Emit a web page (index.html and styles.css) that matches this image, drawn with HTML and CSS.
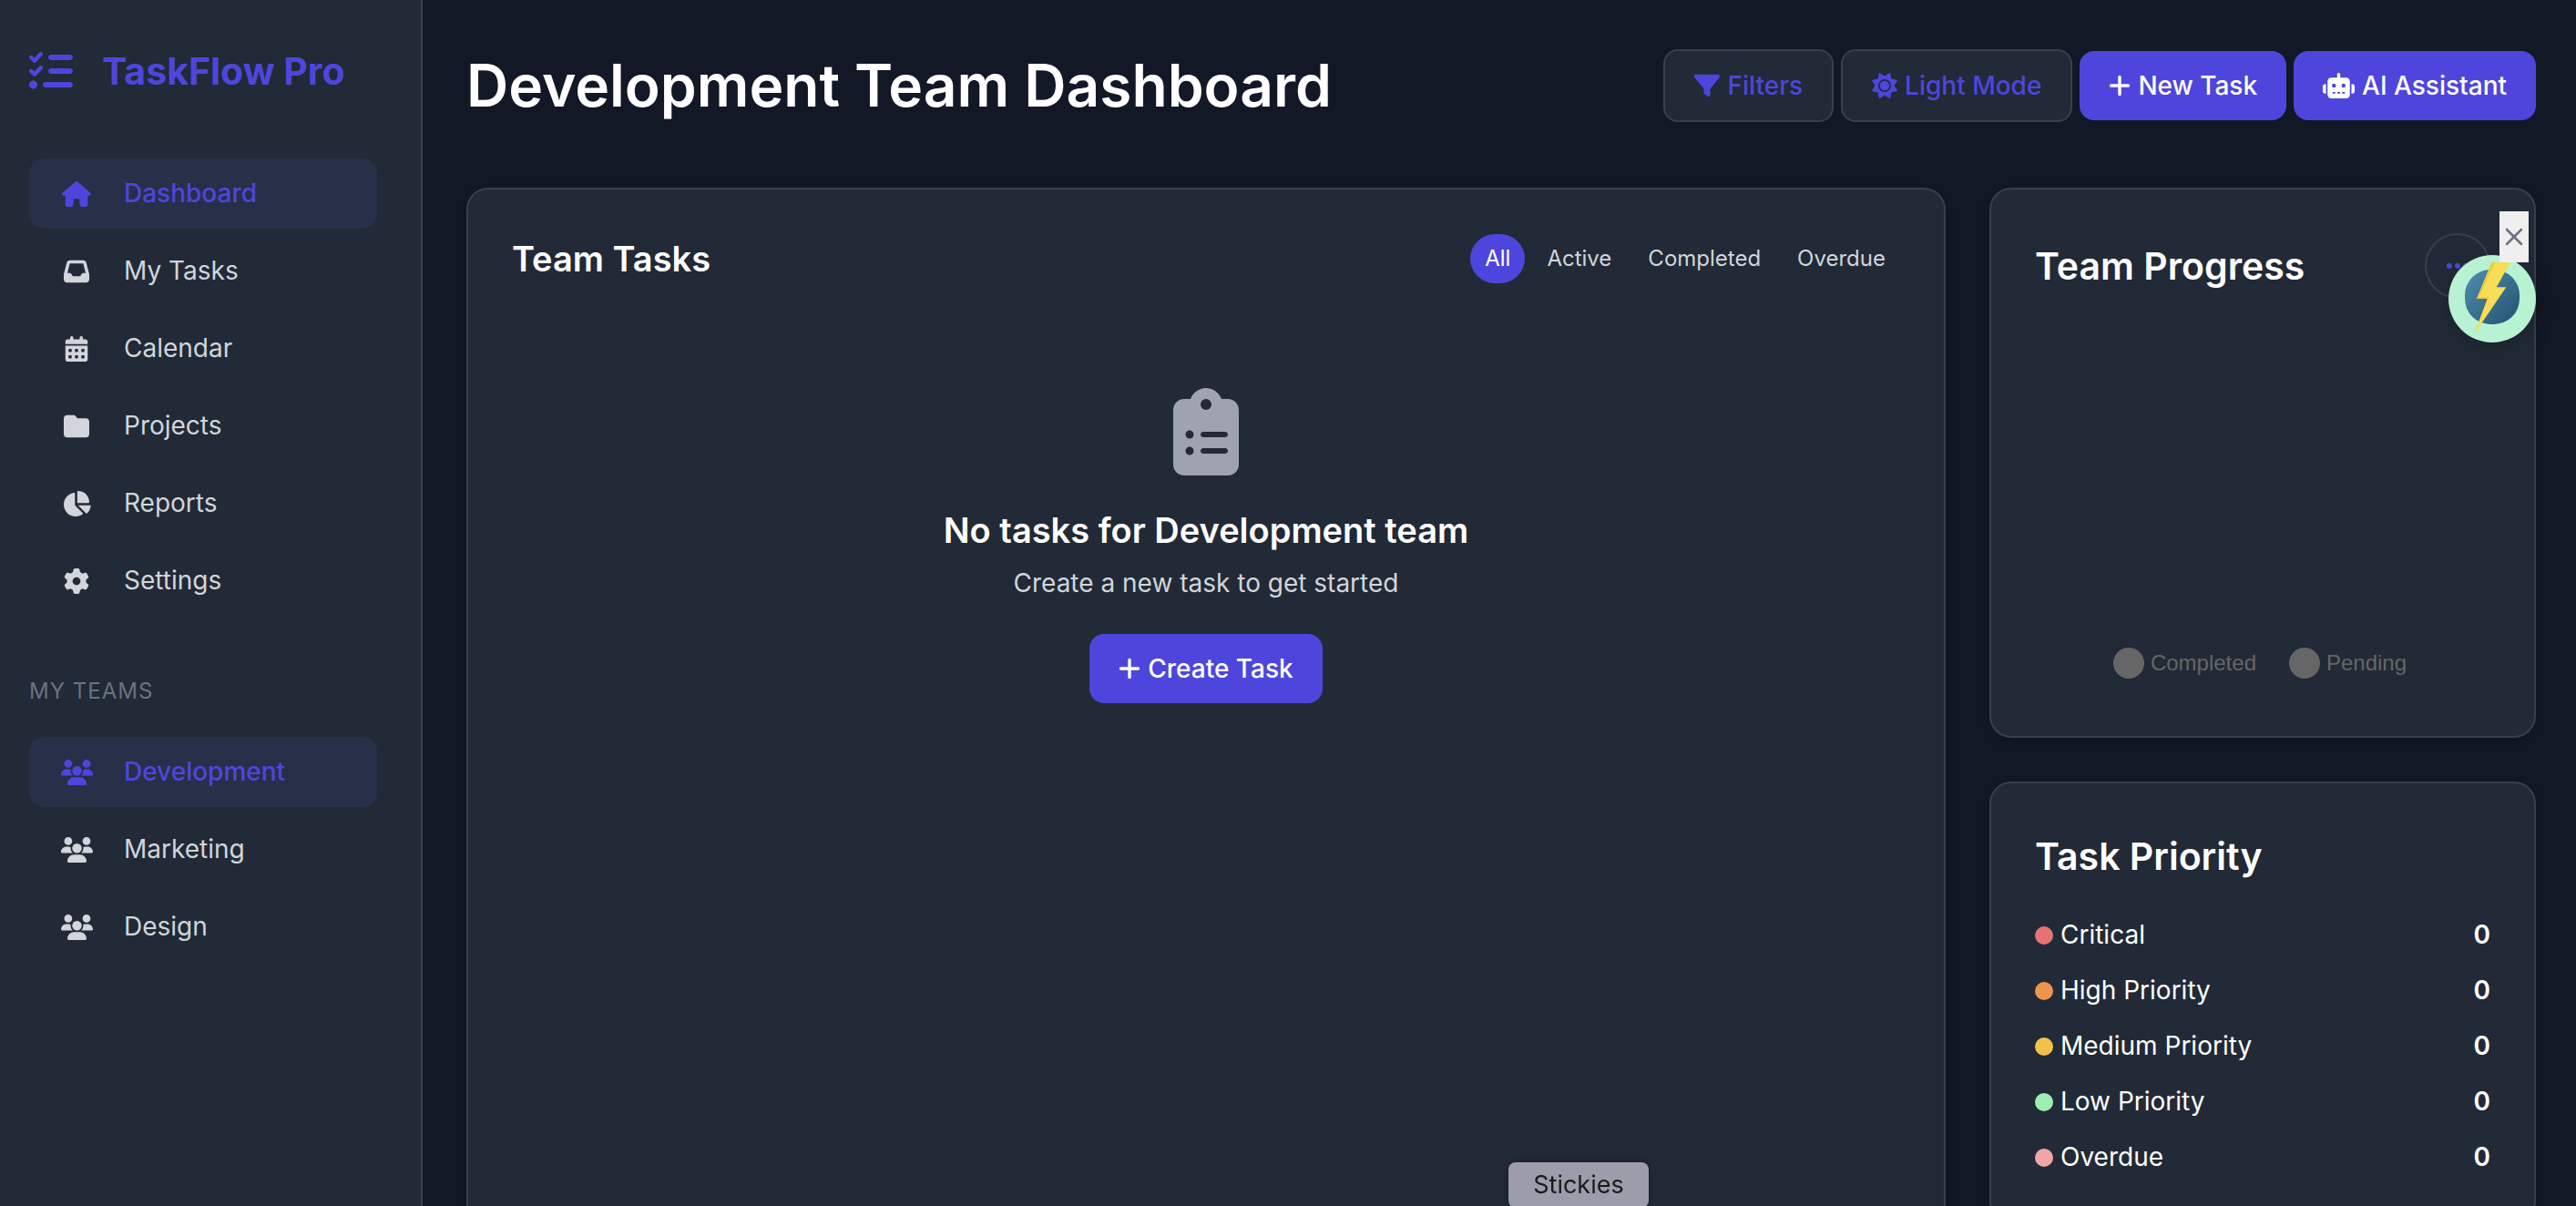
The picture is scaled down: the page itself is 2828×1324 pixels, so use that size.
FILE: index.html
```html
<!DOCTYPE html>
<html lang="en">
<head>
<meta charset="utf-8">
<meta name="viewport" content="width=device-width, initial-scale=1">
<title>TaskFlow Pro</title>
<link rel="stylesheet" href="styles.css">
</head>
<body>
<svg class="sprite" aria-hidden="true">
  <symbol id="i-house" viewBox="0 0 576 512"><path d="M575.8 255.5c0 18-15 32.1-32 32.1h-32l.7 160.2c0 2.7-.2 5.4-.5 8.1V472c0 22.1-17.9 40-40 40H456c-1.1 0-2.2 0-3.3-.1c-1.4 .1-2.8 .1-4.2 .1H416 392c-22.1 0-40-17.9-40-40V448 384c0-17.7-14.3-32-32-32H256c-17.7 0-32 14.3-32 32v64 24c0 22.1-17.9 40-40 40H160 128.1c-1.5 0-3-.1-4.5-.2c-1.2 .1-2.4 .2-3.6 .2H104c-22.1 0-40-17.9-40-40V360c0-.9 0-1.9 .1-2.8V287.6H32c-18 0-32-14-32-32.1c0-9 3-17 10-24L266.4 8c7-7 15-8 22-8s15 2 21 7L564.8 231.5c8 7 12 15 11 24z"/></symbol>
  <symbol id="i-inbox" viewBox="0 0 512 512"><path d="M121 32C91.6 32 66 52 58.9 80.5L1.9 308.4C.6 313.5 0 318.7 0 323.9V416c0 35.3 28.7 64 64 64H448c35.3 0 64-28.7 64-64V323.9c0-5.2-.6-10.4-1.9-15.5l-57-227.9C446 52 420.4 32 391 32H121zm0 64H391l48 192H387.8c-12.1 0-23.2 6.8-28.6 17.7l-14.3 28.6c-5.4 10.8-16.5 17.7-28.6 17.7H195.8c-12.1 0-23.2-6.8-28.6-17.7l-14.3-28.6c-5.4-10.8-16.5-17.7-28.6-17.7H73L121 96z"/></symbol>
  <symbol id="i-calendar" viewBox="0 0 448 512"><path d="M128 0c17.7 0 32 14.3 32 32V64H288V32c0-17.7 14.3-32 32-32s32 14.3 32 32V64h48c26.5 0 48 21.5 48 48v48H0V112C0 85.5 21.5 64 48 64H96V32c0-17.7 14.3-32 32-32zM0 192H448V464c0 26.5-21.5 48-48 48H48c-26.5 0-48-21.5-48-48V192zm64 80v32c0 8.8 7.2 16 16 16h32c8.8 0 16-7.2 16-16V272c0-8.8-7.2-16-16-16H80c-8.8 0-16 7.2-16 16zm128 0v32c0 8.8 7.2 16 16 16h32c8.8 0 16-7.2 16-16V272c0-8.8-7.2-16-16-16H208c-8.8 0-16 7.2-16 16zm144-16c-8.8 0-16 7.2-16 16v32c0 8.8 7.2 16 16 16h32c8.8 0 16-7.2 16-16V272c0-8.8-7.2-16-16-16H336zM64 400v32c0 8.8 7.2 16 16 16h32c8.8 0 16-7.2 16-16V400c0-8.8-7.2-16-16-16H80c-8.8 0-16 7.2-16 16zm144-16c-8.8 0-16 7.2-16 16v32c0 8.8 7.2 16 16 16h32c8.8 0 16-7.2 16-16V400c0-8.8-7.2-16-16-16H208zm112 16v32c0 8.8 7.2 16 16 16h32c8.8 0 16-7.2 16-16V400c0-8.8-7.2-16-16-16H336c-8.8 0-16 7.2-16 16z"/></symbol>
  <symbol id="i-folder" viewBox="0 0 512 512"><path d="M64 480H448c35.3 0 64-28.7 64-64V160c0-35.3-28.7-64-64-64H288c-10.1 0-19.6-4.7-25.6-12.8L243.2 57.6C231.1 41.5 212.1 32 192 32H64C28.7 32 0 60.7 0 96V416c0 35.3 28.7 64 64 64z"/></symbol>
  <symbol id="i-pie" viewBox="0 0 576 512"><path d="M304 240V16.6c0-9 7-16.6 16-16.6C443.7 0 544 100.3 544 224c0 9-7.6 16-16.6 16H304zM32 272C32 150.7 122.1 50.3 239 34.3c9.2-1.3 17 6.1 17 15.4V288L412.5 444.5c6.7 6.7 6.2 17.7-1.5 23.1C371.8 495.6 323.8 512 272 512C139.5 512 32 404.6 32 272zm526.4 16c9.3 0 16.6 7.8 15.4 17c-7.7 55.9-34.6 105.6-73.9 142.3c-6 5.6-15.4 5.2-21.2-.7L320 288H558.4z"/></symbol>
  <symbol id="i-gear" viewBox="0 0 512 512"><path d="M495.9 166.6c3.2 8.7 .5 18.4-6.4 24.6l-43.3 39.4c1.1 8.3 1.7 16.8 1.7 25.4s-.6 17.1-1.7 25.4l43.3 39.4c6.9 6.2 9.6 15.9 6.4 24.6c-4.4 11.9-9.7 23.3-15.8 34.3l-4.7 8.1c-6.6 11-14 21.4-22.1 31.2c-5.9 7.2-15.7 9.6-24.5 6.8l-55.7-17.7c-13.4 10.3-28.2 18.9-44 25.4l-12.5 57.1c-2 9.1-9 16.3-18.2 17.8c-13.8 2.3-28 3.5-42.5 3.5s-28.7-1.2-42.5-3.5c-9.2-1.5-16.2-8.7-18.2-17.8l-12.5-57.1c-15.8-6.5-30.6-15.1-44-25.4L83.1 425.9c-8.8 2.8-18.6 .3-24.5-6.8c-8.1-9.8-15.5-20.2-22.1-31.2l-4.7-8.1c-6.1-11-11.4-22.4-15.8-34.3c-3.2-8.7-.5-18.4 6.4-24.6l43.3-39.4C64.6 273.1 64 264.6 64 256s.6-17.1 1.7-25.4L22.4 191.2c-6.9-6.2-9.6-15.9-6.4-24.6c4.4-11.9 9.7-23.3 15.8-34.3l4.7-8.1c6.6-11 14-21.4 22.1-31.2c5.9-7.2 15.7-9.6 24.5-6.8l55.7 17.7c13.4-10.3 28.2-18.9 44-25.4l12.5-57.1c2-9.1 9-16.3 18.2-17.8C227.3 1.2 241.5 0 256 0s28.7 1.2 42.5 3.5c9.2 1.5 16.2 8.7 18.2 17.8l12.5 57.1c15.8 6.5 30.6 15.1 44 25.4l55.7-17.7c8.8-2.8 18.6-.3 24.5 6.8c8.1 9.8 15.5 20.2 22.1 31.2l4.7 8.1c6.1 11 11.4 22.4 15.8 34.3zM256 336a80 80 0 1 0 0-160 80 80 0 1 0 0 160z"/></symbol>
  <symbol id="i-users" viewBox="0 0 640 512"><path d="M144 0a80 80 0 1 1 0 160A80 80 0 1 1 144 0zM512 0a80 80 0 1 1 0 160A80 80 0 1 1 512 0zM0 298.7C0 239.8 47.8 192 106.7 192h42.7c15.9 0 31 3.5 44.6 9.7c-1.3 7.2-1.9 14.7-1.9 22.3c0 38.2 16.8 72.5 43.3 96c-.2 0-.4 0-.7 0H21.3C9.6 320 0 310.4 0 298.7zM405.3 320c-.2 0-.4 0-.7 0c26.6-23.5 43.3-57.8 43.3-96c0-7.6-.7-15-1.9-22.3c13.6-6.3 28.7-9.7 44.6-9.7h42.7C592.2 192 640 239.8 640 298.7c0 11.8-9.6 21.3-21.3 21.3H405.3zM224 224a96 96 0 1 1 192 0 96 96 0 1 1 -192 0zM128 485.3C128 411.7 187.7 352 261.3 352H378.7C452.3 352 512 411.7 512 485.3c0 14.7-11.9 26.7-26.7 26.7H154.7c-14.7 0-26.7-11.9-26.7-26.7z"/></symbol>
  <symbol id="i-list" viewBox="0 0 512 512"><path d="M152.1 38.2c9.9 8.9 10.7 24 1.8 33.9l-72 80c-4.4 4.9-10.6 7.8-17.2 7.9s-12.9-2.4-17.6-7L7 113C-2.3 103.6-2.3 88.4 7 79s24.6-9.4 33.9 0l22.1 22.1 55.1-61.2c8.9-9.9 24-10.7 33.9-1.8zm0 160c9.9 8.9 10.7 24 1.8 33.9l-72 80c-4.4 4.9-10.6 7.8-17.2 7.9s-12.9-2.4-17.6-7L7 273c-9.4-9.4-9.4-24.6 0-33.9s24.6-9.4 33.9 0l22.1 22.1 55.1-61.2c8.9-9.9 24-10.7 33.9-1.8zM224 96c0-17.7 14.3-32 32-32H480c17.7 0 32 14.3 32 32s-14.3 32-32 32H256c-17.7 0-32-14.3-32-32zm0 160c0-17.7 14.3-32 32-32H480c17.7 0 32 14.3 32 32s-14.3 32-32 32H256c-17.7 0-32-14.3-32-32zM160 416c0-17.7 14.3-32 32-32H480c17.7 0 32 14.3 32 32s-14.3 32-32 32H192c-17.7 0-32-14.3-32-32zM48 368a48 48 0 1 1 0 96 48 48 0 1 1 0-96z"/></symbol>
  <symbol id="i-filter" viewBox="0 0 512 512"><path d="M3.9 54.9C10.5 40.9 24.5 32 40 32H472c15.5 0 29.5 8.9 36.1 22.9s4.6 30.5-5.2 42.5L320 320.9V448c0 12.1-6.8 23.2-17.7 28.6s-23.8 4.3-33.5-3l-64-48c-8.1-6-12.8-15.5-12.8-25.6V320.9L9 97.3C-.7 85.4-2.8 68.8 3.9 54.9z"/></symbol>
  <symbol id="i-sun" viewBox="0 0 512 512"><path d="M361.5 1.2c5 2.1 8.6 6.6 9.6 11.9L391 121l107.9 19.8c5.3 1 9.8 4.6 11.9 9.6s1.5 10.7-1.6 15.2L446.9 256l62.3 90.3c3.1 4.5 3.7 10.2 1.6 15.2s-6.6 8.6-11.9 9.6L391 391 371.1 498.9c-1 5.3-4.6 9.8-9.6 11.9s-10.7 1.5-15.2-1.6L256 446.9l-90.3 62.3c-4.5 3.1-10.2 3.7-15.2 1.6s-8.6-6.6-9.6-11.9L121 391 13.1 371.1c-5.3-1-9.8-4.6-11.9-9.6s-1.5-10.7 1.6-15.2L65.1 256 2.8 165.7c-3.1-4.5-3.7-10.2-1.6-15.2s6.6-8.6 11.9-9.6L121 121 140.9 13.1c1-5.3 4.6-9.8 9.6-11.9s10.7-1.5 15.2 1.6L256 65.1 346.3 2.8c4.5-3.1 10.2-3.7 15.2-1.6zM160 256a96 96 0 1 1 192 0 96 96 0 1 1 -192 0zm224 0a128 128 0 1 0 -256 0 128 128 0 1 0 256 0z"/></symbol>
  <symbol id="i-plus" viewBox="0 0 448 512"><path d="M256 80c0-17.7-14.3-32-32-32s-32 14.3-32 32V224H48c-17.7 0-32 14.3-32 32s14.3 32 32 32H192V432c0 17.7 14.3 32 32 32s32-14.3 32-32V288H400c17.7 0 32-14.3 32-32s-14.3-32-32-32H256V80z"/></symbol>
  <symbol id="i-robot" viewBox="0 0 640 512"><path d="M320 0c17.7 0 32 14.3 32 32V96H472c39.8 0 72 32.2 72 72V440c0 39.8-32.2 72-72 72H168c-39.8 0-72-32.2-72-72V168c0-39.8 32.2-72 72-72H288V32c0-17.7 14.3-32 32-32zM208 384c-8.8 0-16 7.2-16 16s7.2 16 16 16h32c8.8 0 16-7.2 16-16s-7.2-16-16-16H208zm96 0c-8.8 0-16 7.2-16 16s7.2 16 16 16h32c8.8 0 16-7.2 16-16s-7.2-16-16-16H304zm96 0c-8.8 0-16 7.2-16 16s7.2 16 16 16h32c8.8 0 16-7.2 16-16s-7.2-16-16-16H400zM264 256a40 40 0 1 0 -80 0 40 40 0 1 0 80 0zm152 40a40 40 0 1 0 0-80 40 40 0 1 0 0 80zM48 224H64V416H48c-26.5 0-48-21.5-48-48V272c0-26.5 21.5-48 48-48zm544 0c26.5 0 48 21.5 48 48v96c0 26.5-21.5 48-48 48H576V224h16z"/></symbol>
  <symbol id="i-clipboard" viewBox="0 0 384 512"><path d="M192 0c-41.8 0-77.4 26.7-90.5 64H64C28.7 64 0 92.7 0 128V448c0 35.3 28.7 64 64 64H320c35.3 0 64-28.7 64-64V128c0-35.3-28.7-64-64-64H282.5C269.4 26.7 233.8 0 192 0zm0 64a32 32 0 1 1 0 64 32 32 0 1 1 0-64zM72 272a24 24 0 1 1 48 0 24 24 0 1 1 -48 0zm104-16H304c8.8 0 16 7.2 16 16s-7.2 16-16 16H176c-8.8 0-16-7.2-16-16s7.2-16 16-16zM72 368a24 24 0 1 1 48 0 24 24 0 1 1 -48 0zm88 0c0-8.8 7.2-16 16-16H304c8.8 0 16 7.2 16 16s-7.2 16-16 16H176c-8.8 0-16-7.2-16-16z"/></symbol>
</svg>

<div class="app">
  <aside class="sidebar">
    <div class="logo">
      <svg class="logo-icon"><use href="#i-list"/></svg>
      <span>TaskFlow Pro</span>
    </div>
    <nav class="nav" aria-label="Main">
      <a class="nav-item active" href="#dashboard"><span class="nav-icon"><svg class="icon wide"><use href="#i-house"/></svg></span>Dashboard</a>
      <a class="nav-item" href="#tasks"><span class="nav-icon"><svg class="icon"><use href="#i-inbox"/></svg></span>My Tasks</a>
      <a class="nav-item" href="#calendar"><span class="nav-icon"><svg class="icon"><use href="#i-calendar"/></svg></span>Calendar</a>
      <a class="nav-item" href="#projects"><span class="nav-icon"><svg class="icon"><use href="#i-folder"/></svg></span>Projects</a>
      <a class="nav-item" href="#reports"><span class="nav-icon"><svg class="icon wide"><use href="#i-pie"/></svg></span>Reports</a>
      <a class="nav-item" href="#settings"><span class="nav-icon"><svg class="icon"><use href="#i-gear"/></svg></span>Settings</a>
    </nav>
    <h2 class="section-title">MY TEAMS</h2>
    <nav class="nav" aria-label="Teams">
      <a class="nav-item active" href="#development"><span class="nav-icon"><svg class="icon wider"><use href="#i-users"/></svg></span>Development</a>
      <a class="nav-item" href="#marketing"><span class="nav-icon"><svg class="icon wider"><use href="#i-users"/></svg></span>Marketing</a>
      <a class="nav-item" href="#design"><span class="nav-icon"><svg class="icon wider"><use href="#i-users"/></svg></span>Design</a>
    </nav>
  </aside>

  <main class="main">
    <header class="header">
      <h1>Development Team Dashboard</h1>
      <div class="actions">
        <button class="btn outline" type="button"><svg class="icon"><use href="#i-filter"/></svg>Filters</button>
        <button class="btn outline" type="button"><svg class="icon"><use href="#i-sun"/></svg>Light Mode</button>
        <button class="btn primary" type="button"><svg class="icon narrow"><use href="#i-plus"/></svg>New Task</button>
        <button class="btn primary" type="button"><svg class="icon wider"><use href="#i-robot"/></svg>AI Assistant</button>
      </div>
    </header>

    <div class="grid">
      <section class="card tasks">
        <div class="tasks-head">
          <h2 class="tasks-title">Team Tasks</h2>
          <div class="pills">
            <button class="pill selected" type="button">All</button>
            <button class="pill" type="button">Active</button>
            <button class="pill" type="button">Completed</button>
            <button class="pill" type="button">Overdue</button>
          </div>
        </div>
        <div class="empty">
          <svg class="empty-icon"><use href="#i-clipboard"/></svg>
          <h3>No tasks for Development team</h3>
          <p>Create a new task to get started</p>
          <button class="btn primary" type="button"><svg class="icon narrow"><use href="#i-plus"/></svg>Create Task</button>
        </div>
      </section>

      <div class="side">
        <section class="card">
          <div class="progress-head">
            <h2 class="card-title">Team Progress</h2>
            <button class="more" type="button" aria-label="More options"><i></i><i></i><i></i></button>
          </div>
          <div class="chart">
            <ul class="legend">
              <li><span class="legend-dot"></span>Completed</li>
              <li><span class="legend-dot"></span>Pending</li>
            </ul>
          </div>
        </section>

        <section class="card">
          <h2 class="card-title">Task Priority</h2>
          <dl class="priorities">
            <div><dt><span class="dot critical"></span>Critical</dt><dd>0</dd></div>
            <div><dt><span class="dot high"></span>High Priority</dt><dd>0</dd></div>
            <div><dt><span class="dot medium"></span>Medium Priority</dt><dd>0</dd></div>
            <div><dt><span class="dot low"></span>Low Priority</dt><dd>0</dd></div>
            <div><dt><span class="dot overdue"></span>Overdue</dt><dd>0</dd></div>
          </dl>
        </section>
      </div>
    </div>
  </main>
</div>

<div class="widget">
  <button class="widget-close" type="button" aria-label="Close">
    <svg viewBox="0 0 20 20"><path d="M2 2l16 16M18 2L2 18"/></svg>
  </button>
  <button class="widget-bolt" type="button" aria-label="Quick actions">
    <svg viewBox="0 0 96 96">
      <defs><linearGradient id="disc" x1="0" y1="0" x2="1" y2="1"><stop offset="0" stop-color="#528fae"/><stop offset="1" stop-color="#205270"/></linearGradient></defs>
      <rect x="18" y="16" width="60" height="60" rx="28" fill="url(#disc)"/>
      <path d="M47.5 8H68L52.7 35.3H63.3L28.3 86.7L42.7 48H31z" fill="#f8dd55"/>
      <path d="M47.5 8H51L33.5 46H44.5L28.3 86.7L42.7 48H31z" fill="#efc845"/>
    </svg>
  </button>
</div>
<div class="tooltip" role="tooltip">Stickies</div>
</body>
</html>
```
FILE: styles.css
```css
:root {
  --bg: #121826;
  --panel: #212a36;
  --line: #393f4c;
  --accent: #4e46dc;
  --text: #ffffff;
  --muted: #d2d5db;
  --active: #282f49;
}

* { box-sizing: border-box; margin: 0; padding: 0; }

body {
  height: 100vh;
  overflow: hidden;
  background: var(--bg);
  color: var(--text);
  font-family: "Inter", sans-serif;
  font-size: 28px;
  line-height: 45px;
}

button { font: inherit; border: 0; cursor: pointer; }
a { color: inherit; text-decoration: none; }
ul { list-style: none; }
svg { display: block; fill: currentColor; }

.sprite { display: none; }

.icon { width: 28px; height: 28px; flex: none; }
.icon.narrow { width: 24px; }
.icon.wide { width: 32px; }
.icon.wider { width: 35px; }

.app {
  display: grid;
  grid-template-columns: 464px minmax(0, 1fr);
  height: 100vh;
  overflow: hidden;
}

/* Sidebar */
.sidebar {
  padding: 46px 48px 48px 32px;
  background: var(--panel);
  border-right: 2px solid var(--line);
}

.logo {
  display: flex;
  align-items: center;
  gap: 32px;
  height: 64px;
  margin-bottom: 64px;
  color: var(--accent);
  font-size: 41px;
  font-weight: 700;
  white-space: nowrap;
}

.logo-icon { width: 48px; height: 48px; flex: none; }

.nav { display: flex; flex-direction: column; gap: 8px; }

.nav-item {
  display: flex;
  align-items: center;
  gap: 32px;
  padding: 16px 32px;
  border-radius: 16px;
  color: var(--muted);
}

.nav-item.active { background: var(--active); color: var(--accent); font-weight: 500; }

.nav-icon { display: flex; justify-content: center; width: 40px; }

.section-title {
  margin: 64px 0 32px;
  color: #6b7280;
  font-size: 24px;
  font-weight: 400;
  letter-spacing: 1px;
  line-height: 37px;
}

/* Main */
.main { padding: 54px 44px 48px 48px; }

.header {
  display: flex;
  align-items: center;
  justify-content: space-between;
  margin-bottom: 72px;
}

h1 { font-size: 64px; font-weight: 600; line-height: 80px; }

.actions { display: flex; align-items: center; gap: 8px; }

.btn {
  display: flex;
  align-items: center;
  gap: 8px;
  padding: 16px 32px;
  border-radius: 16px;
  font-weight: 500;
  line-height: 44px;
}

.btn.primary { background: var(--accent); color: #fff; }
.btn.outline { background: var(--panel); color: var(--accent); border: 2px solid var(--line); }

.grid {
  display: grid;
  grid-template-columns: minmax(0, 1fr) 600px;
  gap: 48px;
}

.card {
  padding: 48px;
  background: var(--panel);
  border: 2px solid var(--line);
  border-radius: 24px;
  box-shadow: 0 4px 12px rgba(0, 0, 0, 0.15);
}

.card-title { font-size: 41px; font-weight: 600; line-height: 64px; }

.tasks { min-height: 1200px; }

.tasks-head { display: flex; align-items: center; justify-content: space-between; }

.tasks-title { font-size: 38px; font-weight: 600; line-height: 56px; }

.pills { display: flex; gap: 8px; }

.pill {
  padding: 8px 16px;
  border-radius: 40px;
  background: none;
  color: var(--muted);
  font-size: 24px;
  line-height: 38px;
}

.pill.selected { background: var(--accent); color: #fff; }

.empty {
  display: flex;
  flex-direction: column;
  align-items: center;
  padding-top: 114px;
}

.empty-icon { width: 72px; height: 96px; margin-bottom: 32px; color: #9fa3af; }
.empty h3 { margin-bottom: 8px; font-size: 38px; font-weight: 600; line-height: 56px; }
.empty p { margin-bottom: 33px; color: var(--muted); line-height: 45px; }

.side { display: flex; flex-direction: column; gap: 48px; }

.progress-head {
  display: flex;
  align-items: center;
  justify-content: space-between;
  margin-bottom: 32px;
}

.more {
  display: flex;
  align-items: center;
  justify-content: center;
  gap: 3px;
  width: 72px;
  height: 72px;
  border: 2px solid var(--line);
  border-radius: 50%;
  background: none;
}

.more i { width: 6px; height: 6px; border-radius: 50%; background: var(--accent); }

.chart {
  display: flex;
  align-items: flex-end;
  justify-content: center;
  height: 400px;
  padding: 0 6px 14px 0;
}

.legend {
  display: flex;
  gap: 36px;
  color: #666;
  font-family: "Liberation Sans", sans-serif;
  font-size: 24px;
  line-height: 36px;
}

.legend li { display: flex; align-items: center; gap: 7px; }
.legend-dot { width: 34px; height: 34px; border-radius: 50%; background: #666; }

.priorities { display: flex; flex-direction: column; gap: 16px; margin-top: 32px; }
.priorities div { display: flex; justify-content: space-between; }
.priorities dt { display: flex; align-items: center; gap: 8px; }
.priorities dd { font-weight: 600; }

.dot { width: 20px; height: 20px; border-radius: 50%; }
.critical { background: #e57373; }
.high { background: #ed964b; }
.medium { background: #f2c14a; }
.low { background: #9deeb2; }
.overdue { background: #f0a6a6; }

/* Floating quick-action widget */
.widget { position: fixed; top: 232px; right: 44px; width: 96px; }

.widget-close {
  position: relative;
  z-index: 1;
  display: flex;
  align-items: center;
  justify-content: center;
  width: 32px;
  height: 56px;
  margin: 0 8px -8px auto;
  background: #efefef;
}

.widget-close svg {
  width: 20px;
  height: 20px;
  fill: none;
  stroke: #6b7080;
  stroke-width: 2.5;
  stroke-linecap: round;
}

.widget-bolt {
  display: block;
  width: 96px;
  height: 96px;
  border-radius: 50%;
  background: #b8f2d3;
  box-shadow: 0 8px 24px rgba(0, 0, 0, 0.2);
}

.tooltip {
  position: fixed;
  bottom: -2px;
  left: 1656px;
  width: 154px;
  border-radius: 8px;
  background: #9c9cab;
  box-shadow: 0 0 6px rgba(0, 0, 0, 0.4);
  color: #1a1a1c;
  font-size: 27px;
  line-height: 50px;
  text-align: center;
}
```
